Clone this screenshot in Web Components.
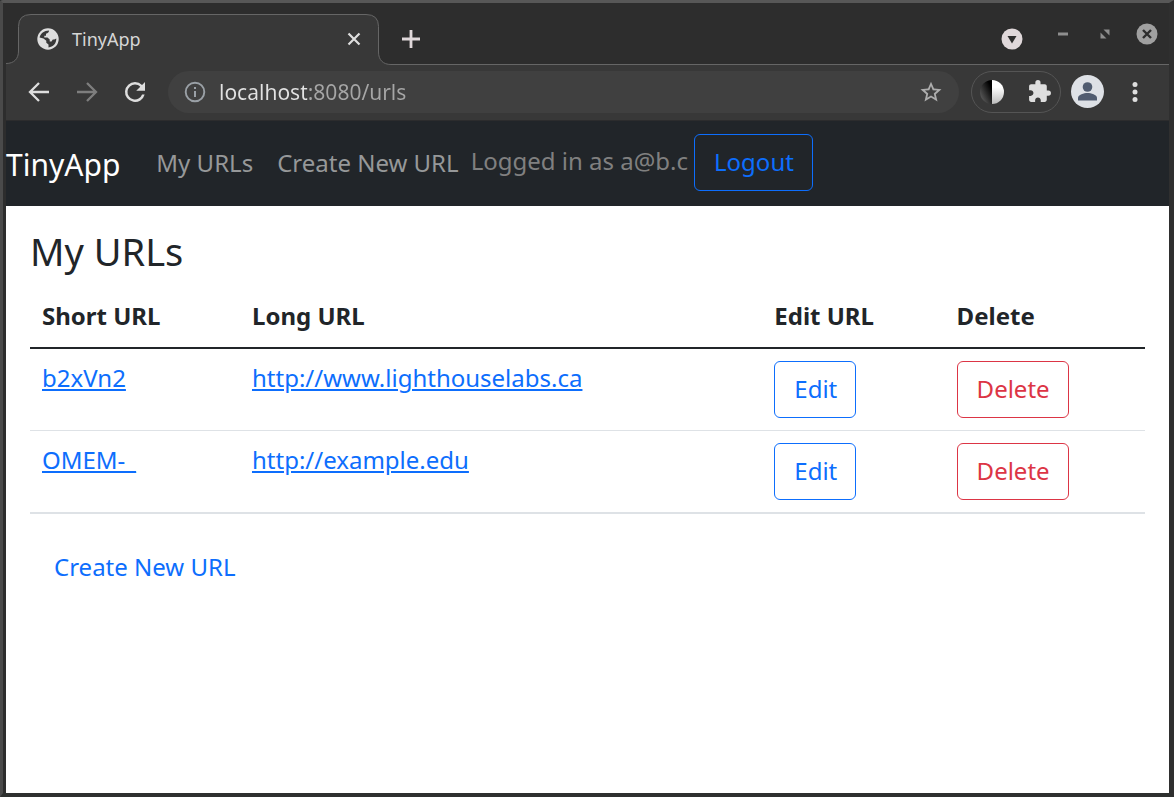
<!DOCTYPE html>
<html lang="en">
<head>
<meta charset="utf-8">
<title>TinyApp</title>
<style>
  html, body { margin: 0; height: 100%; background: #2e302f; }
  body { font-family: "Noto Sans", sans-serif; font-size: 24px; line-height: 34px; color: #212529; }
</style>
</head>
<body>
<browser-window>
  <tab-strip slot="tabs">TinyApp</tab-strip>
  <browser-toolbar slot="toolbar" address="localhost:8080/urls"></browser-toolbar>
  <app-navbar user="a@b.c"></app-navbar>
  <url-list></url-list>
</browser-window>

<script>
const define = (name, html, setup) => {
  const template = document.createElement('template');
  template.innerHTML = '<style>*{box-sizing:border-box}svg{display:block;flex:none}button{font:inherit;color:inherit;background:none;border:0;padding:0;margin:0}</style>' + html;
  customElements.define(name, class extends HTMLElement {
    constructor() {
      super();
      this.attachShadow({ mode: 'open' }).append(template.content.cloneNode(true));
    }
    connectedCallback() { if (setup) setup(this, this.shadowRoot); }
  });
};

define('browser-window', `
<style>
  :host { display: flex; flex-direction: column; min-height: 100vh; box-sizing: border-box;
    border-style: solid; border-width: 3px 5px 4px 3px; border-color: #575757 #2f2f2f #2e302f #4a4a4a;
    border-top-left-radius: 3px; background: #2d2d2d; }
  .frame { flex: 1; display: flex; flex-direction: column; padding-left: 3px; }
  main { flex: 1; background: #fff; }
</style>
<div class="frame">
  <slot name="tabs"></slot>
  <slot name="toolbar"></slot>
  <main><slot></slot></main>
</div>`);

define('tab-strip', `
<style>
  :host { display: block; font-size: 18px; line-height: 24px; color: #d6d6d6; }
  .strip { display: flex; height: 62px; padding-top: 11px; }
  .tab { display: flex; width: 385px; }
  .face { flex: 1; display: flex; align-items: center; gap: 13px; height: 51px;
    padding: 0 3px 2px 6px; background: #383838; border-top: 1px solid #666; }
  .title { flex: 1; }
  .rest { flex: 1; display: flex; align-items: center; border-bottom: 1px solid #666; padding: 0 11px 0 10px; }
  .space { flex: 1; }
  .controls { display: flex; align-items: center; gap: 20px; padding-bottom: 10px; margin-left: 29px; }
</style>
<div class="strip">
  <div class="tab">
    <svg width="25" height="51" viewBox="0 0 25 51"><path d="M0 51V49.500C8 49.500 12.500 45 12.500 37V12.500Q12.500 .5 25 .5V51Z" fill="#383838"/><path d="M0 49.500C8 49.500 12.500 45 12.500 37V12.500Q12.500 .5 25 .5" fill="none" stroke="#666"/></svg>
    <div class="face">
      <svg width="22" height="22" viewBox="1 1 22 22"><circle cx="12" cy="12" r="10.700" fill="#dedede"/><path d="M3.600 10.500C4.500 6.500 8 3.600 13 3.600c0 1.900-1 2.700-3 3.100v2.100H8.300v1.700h3.200l2.200 2v2h1.800l1.300-2h1.500l2-1C20.400 16.500 17 20 12.500 20.400v-2.900l-2.200-1.700v-2L7.500 11.500z" fill="#383838"/></svg>
      <span class="title"><slot></slot></span>
      <button aria-label="Close tab"><svg width="18" height="18" viewBox="0 0 18 18"><path d="M3.500 3.500l11 11m0-11l-11 11" stroke="#dedede" stroke-width="2.200"/></svg></button>
    </div>
    <svg width="25" height="51" viewBox="0 0 25 51"><path d="M0 .5Q12.500 .5 12.500 12.500V38C12.500 46 17 50.500 25 50.500V51H0Z" fill="#383838"/><path d="M0 .5Q12.500 .5 12.500 12.500V38C12.500 46 17 50.500 25 50.500" fill="none" stroke="#666"/></svg>
  </div>
  <div class="rest">
    <button aria-label="New tab"><svg width="20" height="20" viewBox="0 0 20 20"><path d="M10 1v18M1 10h18" stroke="#e0d8da" stroke-width="2.800"/></svg></button>
    <span class="space"></span>
    <button aria-label="Search tabs"><svg width="22" height="22" viewBox="0 0 22 22"><circle cx="11" cy="11" r="10.500" fill="#e0d8da"/><path d="M6.500 8h9L11 15.500z" fill="#2d2d2d"/></svg></button>
    <div class="controls">
      <button aria-label="Minimize"><svg width="22" height="22" viewBox="0 0 22 22"><path d="M6 11h10" stroke="#8e8e8e" stroke-width="3"/></svg></button>
      <button aria-label="Restore"><svg width="22" height="22" viewBox="0 0 22 22"><path d="M9.500 6.500h6v6zM6.500 9.500v6h6z" fill="#8e8e8e"/></svg></button>
      <button aria-label="Close"><svg width="22" height="22" viewBox="0 0 22 22"><circle cx="11" cy="11" r="10.500" fill="#a0a0a0"/><path d="M7 7l8 8m0-8l-8 8" stroke="#2d2d2d" stroke-width="2.400"/></svg></button>
    </div>
  </div>
</div>`);

define('browser-toolbar', `
<style>
  :host { display: block; background: #383838; border-bottom: 1px solid #2c2c2d; }
  .bar { display: flex; align-items: center; height: 55px; padding: 0 22px 2px 18px; }
  .nav { display: flex; gap: 18px; margin-right: 18px; }
  .address { flex: 1; display: flex; align-items: center; gap: 13px; height: 42px;
    padding: 0 16px; border-radius: 21px; background: #404040; margin-right: 12px; }
  input { flex: 1; min-width: 0; height: 32px; border: 0; padding: 0; outline: 0; font: inherit; font-size: 21px;
    background: linear-gradient(90deg, #e2e2e2 88px, #a6a6a6 88px); -webkit-background-clip: text; background-clip: text;
    color: #a6a6a6; -webkit-text-fill-color: transparent; }
  .extensions { display: flex; align-items: center; gap: 23px; width: 90px; height: 42px; padding: 0 8px;
    border: 1px solid #555; border-radius: 21px; margin-right: 10px; }
  .menu { margin-left: 19px; }
</style>
<div class="bar">
  <div class="nav">
    <button aria-label="Back"><svg width="30" height="30" viewBox="0 0 30 30" fill="none" stroke="#dedede" stroke-width="2.300"><path d="M25 15H6.500M15 6l-9 9 9 9"/></svg></button>
    <button aria-label="Forward"><svg width="30" height="30" viewBox="0 0 30 30" fill="none" stroke="#7e7e7e" stroke-width="2.300"><path d="M5 15h18.500M15 6l9 9-9 9"/></svg></button>
    <button aria-label="Reload"><svg width="30" height="30" viewBox="0 0 24 24" fill="#dedede"><path d="M17.650 6.350A7.958 7.958 0 0 0 12 4a8 8 0 1 0 7.730 10h-2.080A6 6 0 1 1 12 6c1.660 0 3.140.69 4.220 1.780L13 11h7V4z"/></svg></button>
  </div>
  <div class="address">
    <svg width="22" height="22" viewBox="0 0 22 22"><circle cx="11" cy="11" r="9.300" fill="none" stroke="#9aa0a6" stroke-width="1.900"/><path d="M11 10v6M11 6v2" stroke="#9aa0a6" stroke-width="2"/></svg>
    <input type="text" aria-label="Address" spellcheck="false">
    <button aria-label="Bookmark this page"><svg width="24" height="24" viewBox="0 0 24 24" fill="#adadad"><path d="M22.500 9.240l-7.500-.65L12 1.700 9 8.600l-7.500.64 5.700 4.930L5.500 21.500 12 17.600l6.500 3.900-1.700-7.330zM12 15.400l-3.760 2.270 1-4.280-3.320-2.880 4.380-.38L12 6.100l1.710 4.040 4.380.38-3.320 2.880 1 4.280z"/></svg></button>
  </div>
  <div class="extensions">
    <svg width="24" height="24" viewBox="0 0 24 24"><defs><linearGradient id="dark" x1="1" x2=".2" y1=".2" y2="1"><stop offset=".1" stop-color="#000"/><stop offset=".9" stop-color="#555"/></linearGradient><linearGradient id="light" x2="0" y2="1"><stop offset=".3" stop-color="#fff"/><stop offset="1" stop-color="#bbb"/></linearGradient></defs><path d="M12 0a12 12 0 0 0 0 24z" fill="url(#dark)"/><path d="M12 0a12 12 0 0 1 0 24z" fill="url(#light)"/></svg>
    <button aria-label="Extensions"><svg width="25" height="25" viewBox="0 0 24 24" fill="#dedede"><path d="M20.500 11H19V7c0-1.100-.9-2-2-2h-4V3.500a2.500 2.500 0 0 0-5 0V5H4c-1.100 0-1.990.9-1.990 2v3.800H3.500c1.490 0 2.700 1.210 2.700 2.700s-1.210 2.700-2.700 2.700H2V20c0 1.100.9 2 2 2h3.800v-1.500c0-1.490 1.210-2.700 2.700-2.700s2.700 1.210 2.700 2.700V22H17c1.100 0 2-.9 2-2v-4h1.500a2.500 2.500 0 0 0 0-5z"/></svg></button>
  </div>
  <button aria-label="Profile"><svg width="33" height="33" viewBox="0 0 33 33"><circle cx="16.500" cy="16.500" r="16.500" fill="#dee1e6"/><circle cx="16.500" cy="12" r="4.800" fill="#515c70"/><path d="M7 25.500V23c0-3.500 6-5 9.500-5s9.500 1.500 9.500 5v2.500z" fill="#515c70"/></svg></button>
  <button class="menu" aria-label="Menu"><svg width="24" height="24" viewBox="0 0 24 24" fill="#dedede"><circle cx="12" cy="4.500" r="2.500"/><circle cx="12" cy="12" r="2.500"/><circle cx="12" cy="19.500" r="2.500"/></svg></button>
</div>`, (host, root) => { root.querySelector('input').value = host.getAttribute('address'); });

define('action-button', `
<style>
  :host { display: inline-block; vertical-align: top; color: #0d6efd; }
  :host([danger]) { color: #dc3545; }
  button { display: block; height: 57px; padding: 0 18px 2px 19px; border: 1px solid currentColor; border-radius: 6px; cursor: pointer; }
</style>
<button type="button"><slot></slot></button>`);

define('app-navbar', `
<style>
  :host { display: block; background: #212529; }
  nav { display: flex; flex-wrap: wrap; align-items: center; min-height: 85px; padding-bottom: 2px; }
  a { color: #969899; text-decoration: none; padding: 0 12px; }
  .brand { color: #fff; font-size: 30px; padding: 4px 0 0; margin-right: 24px; }
  .status { color: #808080; padding-bottom: 4px; margin-right: 6px; }
</style>
<nav>
  <a class="brand" href="#">TinyApp</a>
  <a href="#">My URLs</a>
  <a href="#">Create New URL</a>
  <span class="status"></span>
  <action-button>Logout</action-button>
</nav>`, (host, root) => { root.querySelector('.status').textContent = 'Logged in as ' + host.getAttribute('user'); });

define('url-list', `
<style>
  :host { display: block; padding: 24px; }
  h1 { margin: 0 0 14px; font-size: 38px; line-height: 43px; font-weight: 400; }
  table { width: 100%; border-collapse: separate; border-spacing: 0; margin-bottom: 24px; }
  th, td { padding: 12px; text-align: left; vertical-align: top; }
  th { padding-bottom: 14px; border-bottom: 2px solid #212529; }
  td { border-bottom: 1px solid #dee2e6; }
  tr:last-child td { border-bottom-width: 2px; }
  a { color: #0d6efd; }
  .create { display: inline-block; padding: 12px 24px; text-decoration: none; }
</style>
<h1>My URLs</h1>
<table>
  <thead><tr><th>Short URL</th><th>Long URL</th><th>Edit URL</th><th>Delete</th></tr></thead>
  <tbody>
    <tr><td><a href="#">b2xVn2</a></td><td><a href="#">http://www.lighthouselabs.ca</a></td><td><action-button>Edit</action-button></td><td><action-button danger>Delete</action-button></td></tr>
    <tr><td><a href="#">OMEM-_</a></td><td><a href="#">http://example.edu</a></td><td><action-button>Edit</action-button></td><td><action-button danger>Delete</action-button></td></tr>
  </tbody>
</table>
<a class="create" href="#">Create New URL</a>`);
</script>
</body>
</html>
